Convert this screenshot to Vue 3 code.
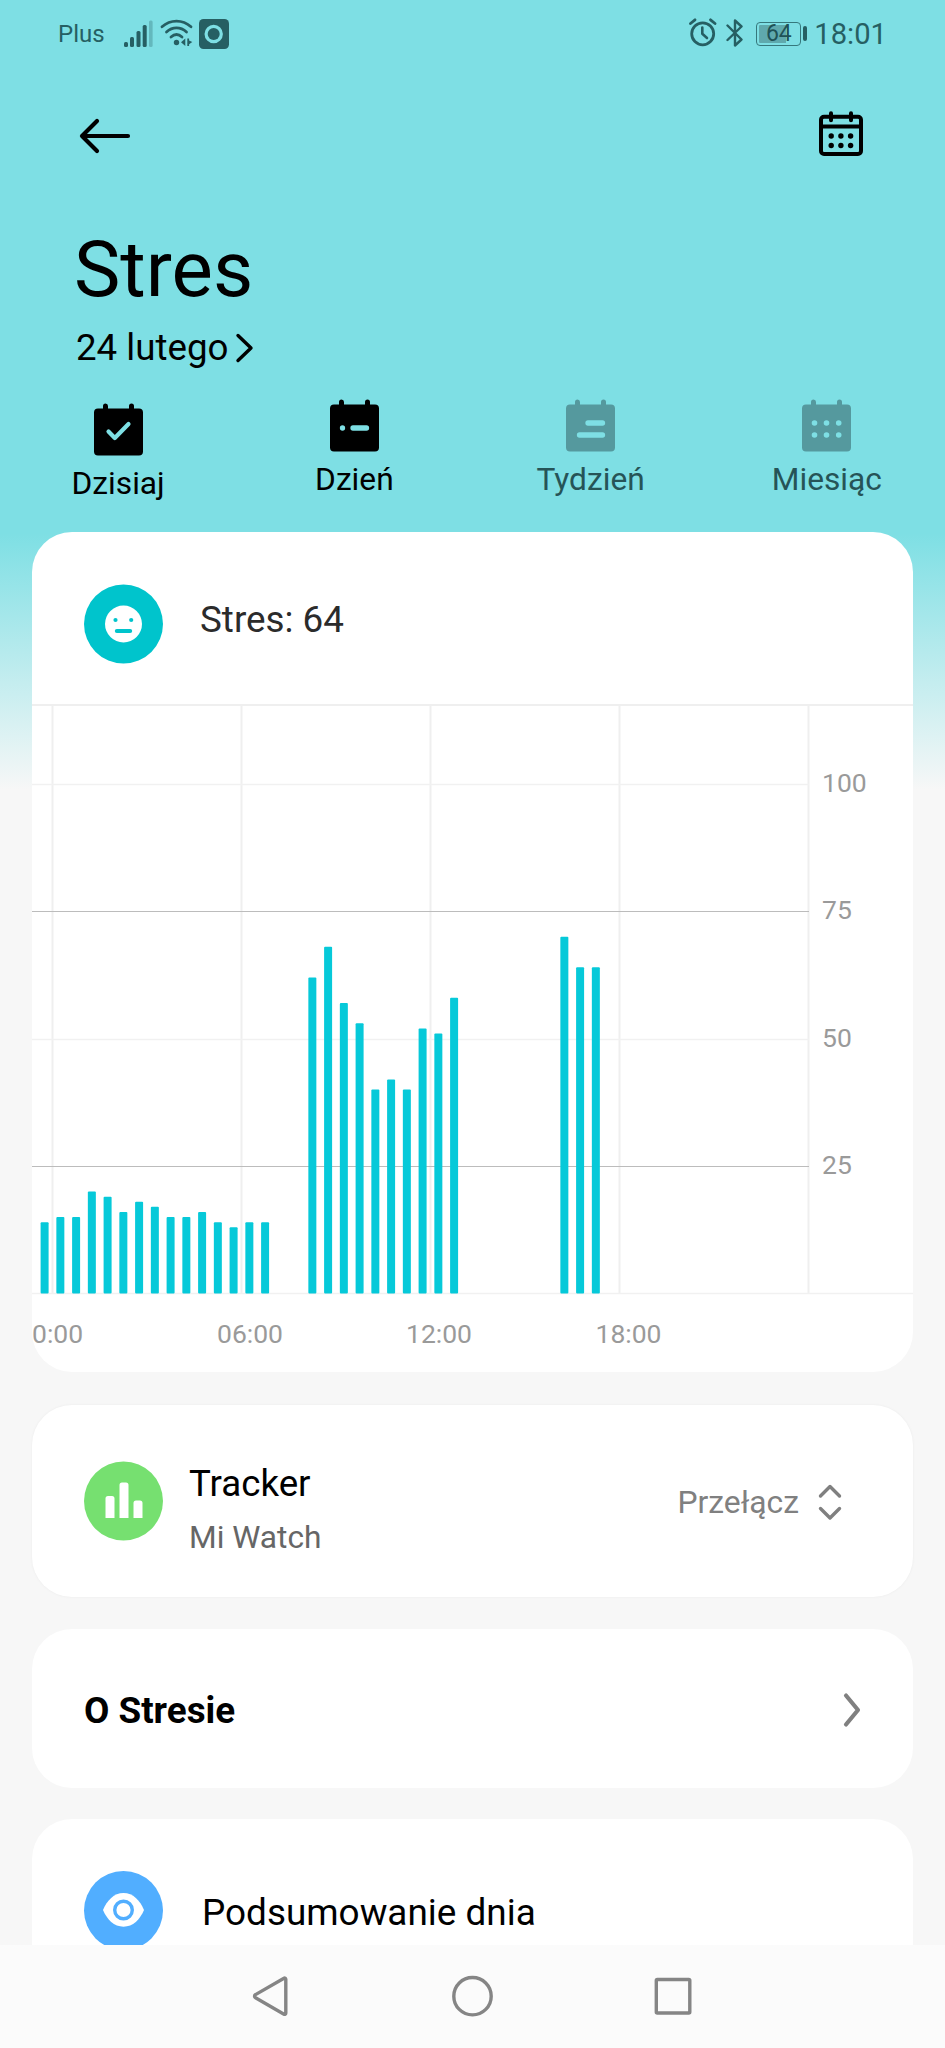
<script setup>
import { ref, computed } from 'vue';

const tabs = [
  { name: 'today', label: 'Dzisiaj' },
  { name: 'day', label: 'Dzień' },
  { name: 'week', label: 'Tydzień' },
  { name: 'month', label: 'Miesiąc' },
];

const isActive = (name) => name === 'today' || name === 'day';

const stress = ref(64);

// one value for every half hour, 0 = no reading
const readings = ref([
  14, 15, 15, 20, 19, 16, 18, 17, 15, 15, 16, 14, 13, 14, 14, 0, 0, 62, 68, 57,
  53, 40, 42, 40, 52, 51, 58, 0, 0, 0, 0, 0, 0, 70, 64, 64,
]);

const baseY = 589.5;
const unit = 5.098;

const bars = computed(() =>
  readings.value
    .map((value, i) => ({
      x: 8.6 + i * 15.75,
      y: baseY - value * unit,
      height: value * unit,
      value,
    }))
    .filter((bar) => bar.value > 0)
);

const levels = [100, 75, 50, 25].map((value) => ({
  value,
  y: Math.round(baseY - value * unit),
  strong: value === 75 || value === 25,
}));

const columns = [20.5, 209.5, 398.5, 587.5, 776.5];

const hours = [
  { label: '0:00', x: 0 },
  { label: '06:00', x: 185 },
  { label: '12:00', x: 374 },
  { label: '18:00', x: 563.5 },
];
</script>

<template>
  <div class="page">
    <div class="status">
      <span class="carrier">Plus</span>
      <svg class="signal" width="29" height="28" viewBox="0 0 29 28">
        <rect x="0" y="22" width="4" height="5" rx="1.5" />
        <rect x="6" y="17" width="4" height="10" rx="1.5" />
        <rect x="12.5" y="11" width="4" height="16" rx="1.5" />
        <rect x="18.7" y="5" width="4" height="22" rx="1.5" />
        <rect x="25" y="0.5" width="3.6" height="26.5" rx="1.5" opacity="0.3" />
      </svg>
      <svg class="wifi" width="34" height="28" viewBox="0 0 34 28">
        <g fill="none" stroke="currentColor" stroke-width="2.8" stroke-linecap="round">
          <path d="M2 7.8C10.5 0.2 22.5 0.2 31 7.8" />
          <path d="M6.5 13C12.5 7.6 20.5 7.6 26.5 13" />
          <path d="M11 18C14.5 14.8 18.5 14.8 22 18" />
        </g>
        <circle cx="16.5" cy="23.5" r="2.7" />
        <path d="M25.3 19.5v7.5l-4.3-3.75zM27.3 19.5l1.8 0 0 2 3.2 1.5-3.2 2.3 0 1.7-1.8 0z" />
      </svg>
      <svg class="recorder" width="30" height="30" viewBox="0 0 30 30">
        <rect width="30" height="30" rx="4.5" />
        <circle cx="14.7" cy="15" r="7.7" fill="#7edfe4" stroke="#7edfe4" stroke-width="3" />
        <circle cx="14.7" cy="15" r="6" />
      </svg>
      <span class="spacer"></span>
      <svg class="alarm" width="28" height="29" viewBox="0 0 28 29">
        <g fill="none" stroke="currentColor" stroke-linecap="round">
          <circle cx="13.7" cy="15.8" r="11" stroke-width="2.8" />
          <path d="M13.3 9.5v6.3l4.7 4.2" stroke-width="2.6" stroke-linejoin="round" />
          <path d="M1.5 5.5l4.5-3.7M26 5.5l-4.5-3.7" stroke-width="2.8" />
        </g>
      </svg>
      <svg class="bluetooth" width="18" height="30" viewBox="0 0 18 30">
        <path d="M1.5 7.5L15.5 21.5 9 27.5V2.5L15.5 8.5 1.5 22" fill="none" stroke="currentColor" stroke-width="2.4" stroke-linejoin="round" stroke-linecap="round" />
      </svg>
      <div class="battery"><span>{{ stress }}</span></div>
      <div class="battery-tip"></div>
      <span class="clock">18:01</span>
    </div>

    <div class="toolbar">
      <svg width="54" height="40" viewBox="0 0 54 40">
        <path d="M50 20H4M19 5L4 20l15 15" fill="none" stroke="#000" stroke-width="4.2" stroke-linecap="round" stroke-linejoin="round" />
      </svg>
      <svg class="calendar" width="44" height="46" viewBox="0 0 44 46">
        <g fill="none" stroke="#000" stroke-width="4">
          <rect x="2" y="5.7" width="40" height="37.3" rx="3" />
          <path d="M2 15.5h40" />
          <path d="M12 2.2v7M32 2.2v7" stroke-linecap="round" />
        </g>
        <circle v-for="n in 6" :key="n" :cx="12.2 + ((n - 1) % 3) * 9.7" :cy="n > 3 ? 34.5 : 25" r="2.7" />
      </svg>
    </div>

    <h1 class="title">Stres</h1>
    <div class="date">
      <span>24 lutego</span>
      <svg width="20" height="32" viewBox="0 0 20 32">
        <path d="M3 3.5L16 16 3 28.5" fill="none" stroke="#000" stroke-width="3.4" stroke-linecap="round" stroke-linejoin="round" />
      </svg>
    </div>

    <div class="tabs">
      <div v-for="tab in tabs" :key="tab.name" class="tab" :class="[tab.name, { active: isActive(tab.name) }]">
        <svg width="49" height="53" viewBox="0 0 49 53">
          <path class="sheet" d="M4 5.5h5V3a2.5 2.5 0 0 1 5 0v2.5h21V3a2.5 2.5 0 0 1 5 0v2.5h5a4 4 0 0 1 4 4v39a4 4 0 0 1-4 4H4a4 4 0 0 1-4-4v-39a4 4 0 0 1 4-4z" />
          <g fill="none" stroke="#7edfe4" stroke-linecap="round" stroke-linejoin="round">
            <path v-if="tab.name === 'today'" d="M14.5 28.5l6.3 6.5L34.5 21" stroke-width="4.2" />
            <path v-if="tab.name === 'day'" d="M12.5 29h0.01M23 29h13.5" stroke-width="5.3" />
            <path v-if="tab.name === 'week'" d="M22 24h14.5M13.5 36h23" stroke-width="5.3" />
            <path v-if="tab.name === 'month'" d="M12.5 24h0.01M24.5 24h0.01M36.7 24h0.01M12.5 36h0.01M24.5 36h0.01M36.7 36h0.01" stroke-width="5.6" />
          </g>
        </svg>
        <span>{{ tab.label }}</span>
      </div>
    </div>

    <div class="card chart-card">
      <div class="chart-head">
        <svg width="80" height="80" viewBox="0 0 80 80">
          <circle cx="40.5" cy="40" r="39.5" fill="#00c4cc" />
          <circle cx="40.5" cy="40" r="18.5" fill="#fff" />
          <g fill="#00c4cc">
            <circle cx="32.5" cy="36" r="2.1" />
            <circle cx="48.2" cy="36" r="2.1" />
            <rect x="31.8" y="45" width="17.4" height="4" rx="2" />
          </g>
        </svg>
        <span>Stres: {{ stress }}</span>
      </div>
      <svg class="chart" width="881" height="668" viewBox="0 0 881 668">
        <g class="grid">
          <line v-for="x in columns" :key="x" :x1="x" :x2="x" y1="1" y2="589" class="column" />
          <line x1="0" x2="881" y1="1" y2="1" class="column" />
          <line x1="0" x2="881" y1="589.5" y2="589.5" />
          <line v-for="level in levels" :key="level.value" x1="0" x2="777" :y1="level.y + 0.5" :y2="level.y + 0.5" :class="{ strong: level.strong }" />
        </g>
        <rect v-for="bar in bars" :key="bar.x" class="bar" :x="bar.x" :y="bar.y" width="8" :height="bar.height" rx="1" />
        <text v-for="level in levels" :key="level.value" x="790" :y="level.y + 8">{{ level.value }}</text>
        <text v-for="hour in hours" :key="hour.label" :x="hour.x" y="639">{{ hour.label }}</text>
      </svg>
    </div>

    <div class="card tracker">
      <svg width="80" height="80" viewBox="0 0 80 80">
        <circle cx="40.5" cy="40" r="39.5" fill="#76e070" />
        <path d="M22.5 57V37.5a2.5 2.5 0 0 1 2.5-2.5h4a2.5 2.5 0 0 1 2.5 2.5V57zM36.5 57V24a2.5 2.5 0 0 1 2.5-2.5h4a2.5 2.5 0 0 1 2.5 2.5v33zM50.5 57V42a2.5 2.5 0 0 1 2.5-2.5h4a2.5 2.5 0 0 1 2.5 2.5v15z" fill="#fff" />
      </svg>
      <div class="tracker-text">
        <div class="name">Tracker</div>
        <div class="device">Mi Watch</div>
      </div>
      <span class="switch">Przełącz</span>
      <svg class="updown" width="24" height="38" viewBox="0 0 24 38">
        <path d="M2.5 13L12 3.5 21.5 13M2.5 25.5L12 35l9.5-9.5" fill="none" stroke="#808080" stroke-width="3.4" stroke-linecap="round" stroke-linejoin="round" />
      </svg>
    </div>

    <div class="card about">
      <span>O Stresie</span>
      <svg width="20" height="36" viewBox="0 0 20 36">
        <path d="M4 3.5L16 18 4 32.5" fill="none" stroke="#808080" stroke-width="4.2" stroke-linecap="round" stroke-linejoin="round" />
      </svg>
    </div>

    <div class="card summary">
      <svg width="80" height="80" viewBox="0 0 80 80">
        <circle cx="40.5" cy="39.5" r="39.5" fill="#51aeff" />
        <path d="M20 39C24 29.5 31 22 40.5 22S57 29.500 61 39C57 48.500 50 55.700 40.500 55.700S24 48.500 20 39z" fill="#fff" />
        <circle cx="40.5" cy="39" r="8.8" fill="#fff" stroke="#51aeff" stroke-width="3.4" />
      </svg>
      <span>Podsumowanie dnia</span>
    </div>

    <div class="navbar">
      <svg width="945" height="103" viewBox="0 0 945 103">
        <g fill="none" stroke="#858585" stroke-width="3.4" stroke-linejoin="round">
          <path d="M284 33.2L255.500 49.600a1.800 1.800 0 0 0 0 3.200L284 69.200a1.200 1.200 0 0 0 1.800-1V34.200a1.200 1.200 0 0 0-1.800-1z" />
          <circle cx="472.5" cy="51.2" r="18.7" />
          <rect x="656.3" y="34.5" width="33.5" height="33.5" rx="1" />
        </g>
      </svg>
    </div>
  </div>
</template>

<style>
body {
  background: #f7f7f7;
}
</style>

<style scoped>
.page {
  width: 945px;
  height: 2048px;
  overflow: hidden;
  display: flex;
  flex-direction: column;
  background: linear-gradient(#7edfe4 534px, #f7f7f7 790px);
  font-family: Roboto, 'Noto Sans', sans-serif;
  color: #000;
}

.page > * {
  flex-shrink: 0;
}

svg {
  display: block;
  flex-shrink: 0;
}

.status {
  height: 67px;
  box-sizing: border-box;
  padding: 0 58px;
  display: flex;
  align-items: center;
  color: #265f63;
  fill: #265f63;
}

.carrier {
  width: 66px;
  font-size: 24px;
}

.signal {
  margin-right: 7px;
}

.wifi {
  margin: -2px 5px 0 0;
}

.spacer {
  flex: 1;
}

.alarm {
  margin: -2px 9px 0 0;
}

.bluetooth {
  margin: -2px 12px 0 0;
}

.battery {
  width: 45px;
  height: 24px;
  box-sizing: border-box;
  border: 1.5px solid #36787c;
  border-radius: 4px;
  padding: 2px;
  background: linear-gradient(90deg, #5fa9ad 27px, transparent 27px) content-box;
  display: flex;
  align-items: center;
  justify-content: center;
}

.battery span {
  font-size: 23px;
  line-height: 20px;
  color: #1f5256;
}

.battery-tip {
  width: 4px;
  height: 15px;
  margin: 0 7px 0 2px;
  border-radius: 2px;
  background: #265f63;
}

.clock {
  font-size: 29.2px;
}

.toolbar {
  height: 138px;
  box-sizing: border-box;
  padding: 0 82px 0 78px;
  display: flex;
  align-items: center;
  justify-content: space-between;
}

.calendar {
  margin-bottom: 4px;
}

.title {
  margin: 23px 0 0 74px;
  font-size: 78px;
  font-weight: 400;
  line-height: 84px;
}

.date {
  margin: 14px 0 0 76px;
  height: 44px;
  display: flex;
  align-items: center;
  gap: 7px;
  font-size: 36.7px;
  line-height: 44px;
}

.tabs {
  height: 133px;
  margin-top: 29px;
  display: flex;
}

.tab {
  flex: 1;
  display: flex;
  flex-direction: column;
  align-items: center;
  gap: 10px;
  font-size: 31.7px;
  line-height: 36px;
  color: #265457;
}

.tab .sheet {
  fill: #55999e;
}

.tab.active {
  color: #000;
}

.tab.active .sheet {
  fill: #000;
}

.tab.today {
  padding-top: 4px;
}

.card {
  margin: 0 32px 32px;
  box-sizing: border-box;
  border-radius: 40px;
  background: #fff;
  overflow: hidden;
}

.chart-card {
  height: 840px;
  margin-bottom: 33px;
}

.chart-head {
  height: 172px;
  box-sizing: border-box;
  padding: 52px 0 0 51px;
  display: flex;
  gap: 37px;
  font-size: 36.8px;
  line-height: 71px;
  color: #2b2b2b;
}

.chart line {
  stroke: #f1f1f1;
  stroke-width: 1.5;
}

.chart .column {
  stroke: #efefef;
  stroke-width: 2;
}

.chart .strong {
  stroke: #bcbcbc;
  stroke-width: 1;
}

.chart .bar {
  fill: #06c9d9;
}

.chart text {
  font-size: 26.5px;
  fill: #9a9a9a;
}

.tracker {
  height: 192px;
  padding: 56px 71px 0 51px;
  display: flex;
  align-items: flex-start;
  box-shadow: 0 0 3px rgba(0, 0, 0, 0.05);
}

.tracker-text {
  flex: 1;
  margin-left: 26px;
}

.name {
  font-size: 36.7px;
  line-height: 46px;
}

.device {
  margin-top: 11px;
  font-size: 31.7px;
  line-height: 40px;
  color: #666;
}

.switch {
  margin: 21px 19px 0 0;
  font-size: 31.8px;
  line-height: 40px;
  color: #808080;
}

.updown {
  margin-top: 22px;
}

.about {
  height: 159px;
  margin-bottom: 31px;
  padding: 3px 51px 0 52px;
  display: flex;
  align-items: center;
  justify-content: space-between;
  font-size: 36.8px;
  font-weight: 700;
}

.summary {
  height: 126px;
  margin-bottom: 0;
  padding: 52px 51px 0;
  display: flex;
  gap: 39px;
  border-radius: 40px 40px 0 0;
  font-size: 36.9px;
  line-height: 83px;
}

.navbar {
  height: 103px;
  background: #fbfbfb;
}
</style>
